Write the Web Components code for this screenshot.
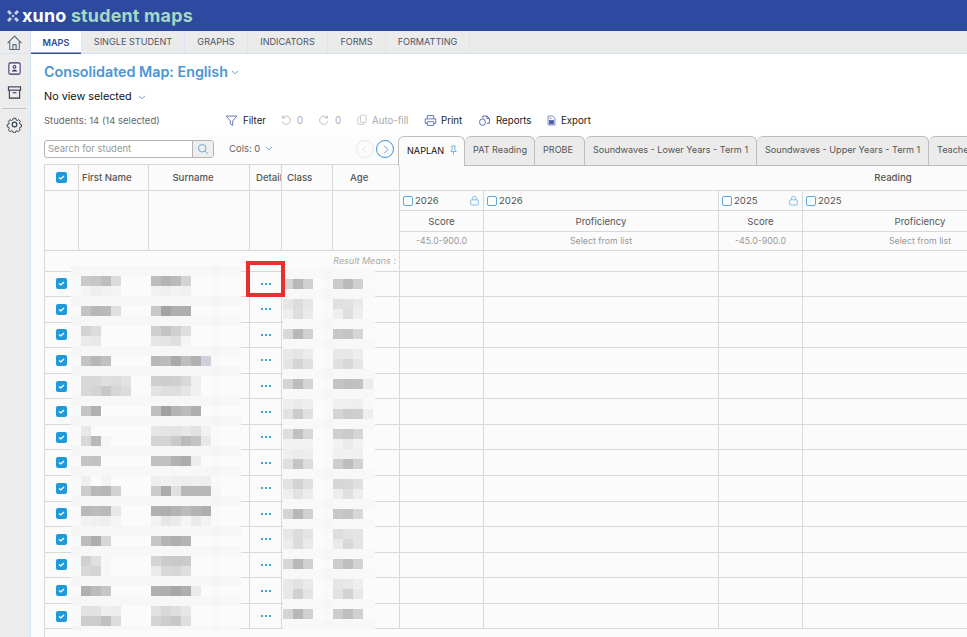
<!DOCTYPE html>
<html>
<head>
<meta charset="utf-8">
<title>xuno student maps</title>
<style>
  html, body { margin: 0; height: 100%; overflow: hidden; background: #fcfcfc; }
  body { font-family: "Inter", "Noto Sans", sans-serif; display: flex; flex-direction: column; width: 967px; height: 637px; }
</style>
</head>
<body>
<app-header></app-header>
<app-shell>
  <side-rail slot="rail"></side-rail>
  <nav-tabs></nav-tabs>
  <map-heading></map-heading>
  <map-toolbar></map-toolbar>
  <map-sheet></map-sheet>
</app-shell>

<script>
const ICONS = {
  home: '<path d="M1.500 8.500 8 2l6.500 6.500M3.500 7v7.500h9V7M6.500 14.500v-4.500h3v4.500"/>',
  card: '<rect x="2" y="2" width="12" height="12" rx="1.500" fill="#f4f4f8"/><circle cx="8" cy="6.200" r="1.500"/><path d="M5 11.300c.3-1.500 1.500-2 3-2s2.700.5 3 2z" fill="currentColor" stroke="none"/>',
  box: '<rect x="1.500" y="2" width="13" height="3.500"/><path d="M2.500 5.500v8.500h11V5.500M6 8.200h4"/>',
  gear: '<circle cx="8" cy="8" r="2.200"/><path d="M6.600 1.500h2.800l.4 1.900 1.300.6 1.700-1 1.800 2-1.100 1.600.4 1.300 1.800.5v2.600l-1.800.5-.5 1.300 1 1.600-1.900 1.900-1.600-1-1.400.5-.4 1.800H6.600l-.4-1.800-1.400-.5-1.600 1-1.900-1.900 1-1.600-.5-1.300-1.800-.5V8.400l1.800-.5.4-1.300-1.100-1.600 1.800-2 1.700 1 1.300-.6z" transform="translate(1.200 .9) scale(.85)"/>',
  filter: '<path d="M1.500 2.500h13L9.500 8.500v5.500l-3-2V8.500z"/>',
  undo: '<path d="M3.500 2v3.500H7M3.700 5.300A5.500 5.500 0 1 1 3 9.500"/>',
  redo: '<path d="M12.500 2v3.500H9M12.300 5.300A5.500 5.500 0 1 0 13 9.500"/>',
  copy: '<rect x="6" y="1.500" width="7.500" height="10" rx="1.500"/><path d="M6 4H4a1.500 1.500 0 0 0-1.500 1.500v7A1.500 1.500 0 0 0 4 14h5a1.500 1.500 0 0 0 1.500-1.500v-1"/>',
  print: '<path d="M4 6V2h8v4M4 11.500H1.500V6h13v5.500H12M4 9.500h8V14H4z"/>',
  reports: '<path d="M6 2.500h5l3 3v6h-3M6 2.500V5"/><rect x="2" y="6" width="7" height="8" rx="3.500"/><path d="M11 2.500v3h3"/>',
  export: '<path d="M3 1.500h7l3 3v10H3z"/><rect x="5" y="8" width="6" height="5" fill="currentColor"/><path d="M5 5h3"/>',
  search: '<circle cx="7" cy="7" r="5"/><path d="m10.700 10.700 3.800 3.800"/>',
  chevron: '<path d="m3 6 5 5 5-5"/>',
  pin: '<path d="M5 1.500h6M6 1.500V7L4 9.500h8L10 7V1.500M8 9.500v5"/>',
  lock: '<rect x="2.500" y="7" width="11" height="7.500" rx="1"/><path d="M5 7V5a3 3 0 0 1 6 0v2"/>',
  left: '<path d="M10 2.500 4.500 8l5.500 5.500"/>',
  right: '<path d="M6 2.500 11.500 8 6 13.500"/>'
};

function icon(name, size, color, width) {
  return `<svg width="${size}" height="${size}" viewBox="0 0 16 16" fill="none" stroke="currentColor" stroke-width="${width || 1.2}" style="color:${color};display:block;flex:none">${ICONS[name]}</svg>`;
}

class AppHeader extends HTMLElement {
  constructor() {
    super();
    this.attachShadow({ mode: "open" });
  }

  connectedCallback() {
    this.shadowRoot.innerHTML = `
    <style>
      :host { display: flex; align-items: center; height: 31px; flex: none; background: #2d49a0; padding-left: 7px; box-sizing: border-box; }
      svg { margin-right: 3px; }
      .brand { font: 700 17.900px/30px "Inter", sans-serif; color: #fff; letter-spacing: .2px; }
      .brand span { color: #a6d8c6; }
    </style>
    <svg width="12" height="12" viewBox="0 0 12 12" fill="#c7d3e6">
      <circle cx="6" cy="6" r="1.200"/>
      <path d="M0 2 2 0 5 3 3 5zM12 2 10 0 7 3 9 5zM0 10 2 12 5 9 3 7zM12 10 10 12 7 9 9 7z"/>
    </svg>
    <div class="brand">xuno <span>student maps</span></div>`;
  }
}

class AppShell extends HTMLElement {
  constructor() {
    super();
    this.attachShadow({ mode: "open" });
  }

  connectedCallback() {
    this.shadowRoot.innerHTML = `
    <style>
      :host { display: flex; flex: 1; min-height: 0; }
      .main { flex: 1; min-width: 0; display: flex; flex-direction: column; overflow: hidden; position: relative; }
    </style>
    <slot name="rail"></slot>
    <div class="main"><slot></slot></div>`;
  }
}

class SideRail extends HTMLElement {
  constructor() {
    super();
    this.attachShadow({ mode: "open" });
  }

  connectedCallback() {
    this.shadowRoot.innerHTML = `
    <style>
      :host { display: flex; flex-direction: column; align-items: center; width: 31px; flex: none; box-sizing: border-box; background: #ececec; border-right: 1px solid #d6e4f5; }
      .home { height: 23px; width: 100%; display: flex; align-items: center; justify-content: center; padding-right: 2px; box-sizing: border-box; border-bottom: 1px solid #d6e4f5; }
      .item { margin: 0 2px 0 0; }
      hr { width: 24px; margin: 8px 2px 7px 0; border: 0; border-top: 1px solid #c4c4c4; }
    </style>
    <div class="home">${icon("home", 17, "#5b6b80", 1)}</div>
    <div class="item" style="margin-top:7px">${icon("card", 15, "#37306a", 1.100)}</div>
    <div class="item" style="margin-top:9px">${icon("box", 15, "#2d2f4a", 1.100)}</div>
    <hr>
    <div class="item">${icon("gear", 17, "#35404f", 1.100)}</div>`;
  }
}

class NavTabs extends HTMLElement {
  constructor() {
    super();
    this.attachShadow({ mode: "open" });
  }

  connectedCallback() {
    const tabs = [["MAPS", 51], ["SINGLE STUDENT", 103], ["GRAPHS", 63], ["INDICATORS", 80], ["FORMS", 58], ["FORMATTING", 84]];
    this.shadowRoot.innerHTML = `
    <style>
      :host { display: flex; height: 23px; flex: none; background: #ebebeb; box-sizing: border-box; border-bottom: 1px solid #d6e4f5; }
      .tab { box-sizing: border-box; text-align: center; font-size: 9.100px; line-height: 22px; color: #4b5566; border-right: 1px solid #dbe5f1; white-space: nowrap; }
      .tab.on { background: #fff; color: #2d49a0; font-weight: 600; box-shadow: inset 0 -1.500px 0 #2d49a0; margin-bottom: -1px; line-height: 23px; }
    </style>
    ${tabs.map((t, i) => `<div class="tab ${i ? "" : "on"}" style="width:${t[1]}px">${t[0]}</div>`).join("")}`;
  }
}

class MapHeading extends HTMLElement {
  constructor() {
    super();
    this.attachShadow({ mode: "open" });
  }

  connectedCallback() {
    this.shadowRoot.innerHTML = `
    <style>
      :host { display: block; flex: none; background: #fff; padding: 8px 0 0 13px; height: 43px; }
      .title { display: flex; align-items: center; gap: 2px; font-size: 14.300px; line-height: 20px; font-weight: 600; color: #4a96d6; }
      .view { display: flex; align-items: center; gap: 5px; margin-top: 7px; font-size: 10.800px; line-height: 16px; color: #111; }
    </style>
    <div class="title">Consolidated Map: English ${icon("chevron", 10, "#4a96d6", 1.400)}</div>
    <div class="view">No view selected ${icon("chevron", 10, "#4a96d6", 1.400)}</div>`;
  }
}

class MapToolbar extends HTMLElement {
  constructor() {
    super();
    this.attachShadow({ mode: "open" });
  }

  connectedCallback() {
    this.shadowRoot.innerHTML = `
    <style>
      :host { display: flex; align-items: center; flex: none; height: 30px; background: #fff; padding: 0 0 0 13px; font-size: 9.700px; }
      .count { color: #666; width: 181px; flex: none; font-size: 9.500px; }
      .item { display: flex; align-items: center; white-space: nowrap; }
      .item span { display: block; }
      .bar { display: flex; align-items: center; }
    </style>
    <div class="count">Students: 14 (14 selected)</div>
    <div class="bar">
      <div class="item" style="color:#222;width:55px"><span style="margin-right:5px">${icon("filter", 13, "#4a59a8", 1)}</span>Filter</div>
      <div class="item" style="color:#aaa;width:38px"><span style="margin-right:5px">${icon("undo", 12, "#aaa", 1)}</span>0</div>
      <div class="item" style="color:#aaa;width:38px"><span style="margin-right:5px">${icon("redo", 12, "#aaa", 1)}</span>0</div>
      <div class="item" style="color:#aaa;width:68px"><span style="margin-right:4px">${icon("copy", 12, "#bbb", 1)}</span>Auto-fill</div>
      <div class="item" style="color:#222;width:54px"><span style="margin-right:4px">${icon("print", 13, "#4a59a8", 1)}</span>Print</div>
      <div class="item" style="color:#222;width:68px"><span style="margin-right:5px">${icon("reports", 13, "#3a4a9a", 1)}</span>Reports</div>
      <div class="item" style="color:#222"><span style="margin-right:4px">${icon("export", 11, "#4a59a8", 1)}</span>Export</div>
    </div>`;
  }
}

class SearchBox extends HTMLElement {
  constructor() {
    super();
    this.attachShadow({ mode: "open" });
  }

  connectedCallback() {
    this.shadowRoot.innerHTML = `
    <style>
      :host { display: flex; width: 170px; height: 18px; margin-bottom: 2px; box-sizing: border-box; border: 1px solid #b5b5b5; border-radius: 3px; background: #fff; overflow: hidden; flex: none; }
      .txt { flex: 1; font-size: 9.500px; line-height: 16px; color: #999; padding-left: 3px; }
      .btn { width: 20px; background: #eee; border-left: 1px solid #b5b5b5; display: flex; align-items: center; justify-content: center; }
    </style>
    <div class="txt">Search for student</div>
    <div class="btn">${icon("search", 12, "#4a9bd8", 1.100)}</div>`;
  }
}

class SheetTabs extends HTMLElement {
  constructor() {
    super();
    this.attachShadow({ mode: "open" });
  }

  connectedCallback() {
    const tabs = [
      ["PAT Reading", 70], ["PROBE", 50],
      ["Soundwaves - Lower Years - Term 1", 172], ["Soundwaves - Upper Years - Term 1", 172], ["Teacher Judgement", 120]
    ];
    this.shadowRoot.innerHTML = `
    <style>
      :host { display: flex; height: 30px; flex: none; position: relative; z-index: 1; margin-bottom: -1px; }
      .tab { box-sizing: border-box; height: 30px; border: 1px solid #bdbdbd; border-left: 0; border-radius: 6px 6px 0 0; background: #ebebeb; padding-left: 8px; font-size: 9.100px; line-height: 25px; color: #555; white-space: nowrap; flex: none; }
      .tab.on { background: #fbfbfb; border-left: 1px solid #bdbdbd; border-bottom: 0; color: #111; display: flex; align-items: center; gap: 4px; width: 67px; padding-bottom: 2px; }
    </style>
    <div class="tab on">NAPLAN ${icon("pin", 11, "#4a9bd8", 1)}</div>
    ${tabs.map(t => `<div class="tab" style="width:${t[1]}px">${t[0]}</div>`).join("")}`;
  }
}

class CheckMark extends HTMLElement {
  constructor() {
    super();
    this.attachShadow({ mode: "open" });
  }

  connectedCallback() {
    const on = this.hasAttribute("on");
    this.shadowRoot.innerHTML = `
    <style>
      :host { display: block; flex: none; width: ${on ? 11 : 10}px; height: ${on ? 11 : 10}px; box-sizing: border-box; border-radius: 2px; ${on ? "background: #2099d8;" : "border: 1px solid #5aa9e0; background: #fcfcfc;"} }
      svg { display: block; }
    </style>
    ${on ? '<svg width="11" height="11" viewBox="0 0 11 11" fill="none" stroke="#fff" stroke-width="1.300"><path d="m3 5.500 1.800 1.500L8 4"/></svg>' : ""}`;
  }
}

// Pixelated cover put over the student names in the screenshot
class PixelMosaic extends HTMLElement {
  constructor() {
    super();
    this.attachShadow({ mode: "open" });
  }

  set rows(data) {
    const { width, height, band, columns, start } = data;
    const color = v => v.length === 2 ? `#${v}${v}${v}` : `#${v}`;
    let rects = "";
    for (let j = 0; j * 10 < height; j++) {
      const row = data.rows[j];
      for (const [x, w, bandColor, plainColor] of band) {
        rects += `<rect x="${x}" y="${j * 10}" width="${w}" height="10" fill="${color(row ? plainColor : bandColor)}"/>`;
      }
      if (!row) continue;
      row.forEach((group, g) => group.forEach((v, i) => {
        rects += `<rect x="${columns[g] + i * 10}" y="${j * 10}" width="10" height="10" fill="${color(v)}"/>`;
      }));
    }
    this.shadowRoot.innerHTML = `
    <style>
      :host { display: block; position: absolute; left: ${data.left}px; top: ${start}px; width: ${width}px; height: ${height}px; z-index: 2; }
      svg { display: block; }
    </style>
    <svg width="${width}" height="${height}" shape-rendering="crispEdges">${rects}</svg>`;
  }
}

const NAME_ROWS = {
  1: [["c9","c6","bd","dc"],["bd","b4","bb","d3"]],
  2: [["f5","ee","f2","f4"],["f2","ef","f3","f1"]],
  4: [["c3","b7","b9","e0"],["c8","a3","af","af"]],
  6: [["d2","dc"],["cf","c4","d0","df"]],
  7: [["ea","e8"],["e5","e4","df","f5"]],
  9: [["c3","b6","c0"],["b8","bb","a9","bd","b0","ced1dc"]],
  11: [["d8","d8","df","dc","e2"],["cf","cd","cf","d9","ef"]],
  12: [["d8","d4","c8","d6","dc"],["e3","de","de","e5","f1"]],
  14: [["c4","b0"],["bf","a0","b4","bb","ae"]],
  16: [["e8","fa"],["e6","e4","e3","e8","e1","f2"]],
  17: [["d8","b8","f5"],["d4","d4","ca","bb","c4","e8"]],
  19: [["c4","c2"],["c0","c0","b2","ac","ed"]],
  21: [["f0","fb","f4"],["ee","f2","ef","ee","f0","ee"]],
  22: [["cc","b8","b6","d2"],["cb","ab","e0","b8","b8","b8","f6"]],
  24: [["b9","bc","b9","e8"],["b0","ae","b4","bb","b4","ae"]],
  25: [["f2","f0","ee","f5"],["f3","e6","eb","f5","ea","f2"]],
  27: [["bd","ad","d6"],["c6","b4","ae","b4"]],
  29: [["d0","df","f7"],["d4","cb","c9","cb"]],
  30: [["d8","d4","f7"],["ea","d8","d6","df"]],
  32: [["b0","bb","c6"],["b0","ae","a6","ae","ea"]],
  34: [["e2","e2","ef","ec"],["e2","d8","de","e6"]],
  35: [["cd","cc","c0","dc"],["d4","cd","c8","df"]]
};

const CLASS_ROWS = {
  1: [["d5","b8","d0"],["cb","ba","d0"]],
  3: [["e6","dc","e6"],["e0","e2","ea"]],
  4: [["ee","de","ea"],["ee","de","ee"]],
  6: [["d8","b8","d0"],["c8","c4","d6"]],
  8: [["e8","e4","ec"],["e8","e8","ee"]],
  9: [["e4","d4","e0"],["e0","d8","e6"]],
  11: [["d4","bc","d4"],["c4","bf","c2","ec"]],
  13: [["ee","ea","ee"],["f0","ef","ee","f8"]],
  14: [["e2","cc","e0"],["d4","cd","cf","ee"]],
  16: [["de","c0","d8"],["cf","ca","d6"]],
  17: [["f2","f2","f2"],["f2","ea","f2"]],
  18: [["ee","ec","ee"],["f0","f0","f0"]],
  19: [["e0","c4","dc"],["cd","bd","d2"]],
  21: [["e2","d2","e0"],["d6","d8","e0"]],
  22: [["ee","e2","ec"],["ee","e0","ee"]],
  24: [["d4","b8","d0"],["c8","c4","d8"]],
  26: [["e6","dc","e4"],["de","e2","e4"]],
  27: [["ec","dc","ea"],["ea","d8","e4"]],
  29: [["d6","b8","d0"],["cc","bf","d2"]],
  31: [["e8","e2","ea"],["e6","e8","ee"]],
  32: [["e8","d0","e4"],["e2","d2","e8"]],
  34: [["d4","b8","d0"],["cc","bf","d0"]]
};

class MapSheet extends HTMLElement {
  constructor() {
    super();
    this.attachShadow({ mode: "open" });
  }

  connectedCallback() {
    const year = (y, lock) => `<div class="c year"><check-mark></check-mark>${y}${lock ? `<span class="lock">${icon("lock", 11, "#6bb4e6", 1.200)}</span>` : ""}</div>`;
    let rows = "";
    for (let i = 0; i < 14; i++) {
      rows += `<div class="c tick"><check-mark on></check-mark></div><div class="c"></div><div class="c"></div>
        <div class="c dots"><i></i><i></i><i></i></div><div class="c"></div><div class="c"></div>
        <div class="c"></div><div class="c"></div><div class="c"></div><div class="c"></div><div class="c"></div>`;
    }
    this.shadowRoot.innerHTML = `
    <style>
      :host { display: block; flex: 1; min-height: 0; position: relative; background: #fcfcfc; padding: 0 0 0 13px; }
      .top { display: flex; align-items: center; height: 30px; }
      .cols { display: flex; align-items: center; gap: 4px; margin: 0 0 4px 15px; font-size: 9.500px; color: #666; width: 127px; flex: none; }
      .nav { display: flex; gap: 2px; width: 42px; flex: none; margin-bottom: 2px; }
      .circle { width: 18px; height: 18px; box-sizing: border-box; border-radius: 50%; display: flex; align-items: center; justify-content: center; }
      .prev { border: 1.500px solid #e8e8e8; }
      .next { border: 1.500px solid #3a96d8; }
      .grid { display: grid; grid-template-columns: 34px 70px 101px 32px 51px 67px 84px 235px 84px 235px 84px; grid-template-rows: 26px 20px 21px 18.500px 21px repeat(14, 25.570px) 12px; background: #fbfbfb; border-top: 1px solid #d8d8d8; border-left: 1px solid #d8d8d8; margin-top: -1px; }
      .c { border-right: 1px solid #d8d8d8; border-bottom: 1px solid #d8d8d8; box-sizing: border-box; min-width: 0; font-size: 9.600px; color: #555; display: flex; align-items: center; justify-content: center; white-space: nowrap; overflow: hidden; }
      .h { font-weight: 500; color: #555; }
      .name { justify-content: flex-start; padding-left: 4px; }
      .blank { grid-row: span 3; }
      .year { justify-content: flex-start; padding-left: 3px; gap: 2px; position: relative; color: #555; }
      .lock { position: absolute; right: 3px; top: 4px; }
      .range { color: #999; font-size: 8.800px; }
      .means { grid-column: span 6; justify-content: flex-end; padding-right: 3px; font-style: italic; font-size: 9px; color: #aaa; }
      .dots { gap: 2px; }
      .dots i { display: block; width: 2px; height: 2px; background: #3aa5d9; }
      .foot { grid-column: 1 / -1; background: #fbfbfb; }
      .mark { position: absolute; left: 215px; top: 126px; width: 39px; height: 36px; box-sizing: border-box; border: 4px solid #e8302f; z-index: 3; }
    </style>
    <div class="top">
      <search-box></search-box>
      <div class="cols">Cols: 0 ${icon("chevron", 10, "#4a96d6", 1.300)}</div>
      <div class="nav">
        <div class="circle prev">${icon("left", 10, "#e2e2e2", 1.400)}</div>
        <div class="circle next">${icon("right", 11, "#3a96d8", 1.300)}</div>
      </div>
      <sheet-tabs></sheet-tabs>
    </div>
    <div class="grid">
      <div class="c"><check-mark on></check-mark></div>
      <div class="c h name" style="padding-left:3px">First Name</div>
      <div class="c h" style="padding-right:12px">Surname</div>
      <div class="c h name" style="padding-left:6px">Details</div>
      <div class="c h name" style="padding-left:5px">Class</div>
      <div class="c h name" style="padding-left:17px">Age</div>
      <div class="c" style="grid-column:span 2;border-right:0"></div>
      <div class="c h" style="grid-column:span 3;border-right:0;padding-right:55px">Reading</div>
      <div class="c blank"></div><div class="c blank"></div><div class="c blank"></div>
      <div class="c blank"></div><div class="c blank"></div><div class="c blank"></div>
      ${year("2026", true)}${year("2026")}${year("2025", true)}${year("2025")}<div class="c"></div>
      <div class="c">Score</div><div class="c">Proficiency</div><div class="c">Score</div><div class="c">Proficiency</div><div class="c"></div>
      <div class="c range">-45.0-900.0</div><div class="c range">Select from list</div><div class="c range">-45.0-900.0</div><div class="c range">Select from list</div><div class="c"></div>
      <div class="c means">Result Means :</div>
      <div class="c"></div><div class="c"></div><div class="c"></div><div class="c"></div><div class="c"></div>
      ${rows}
      <div class="foot"></div>
    </div>
    <pixel-mosaic id="names"></pixel-mosaic>
    <pixel-mosaic id="classes"></pixel-mosaic>
    <div class="mark"></div>`;

    this.shadowRoot.getElementById("names").rows = {
      left: 40, start: 131, width: 170, height: 364, columns: [10, 80], rows: NAME_ROWS,
      band: [[0, 10, "f5", "f9"], [10, 130, "f7", "fb"], [140, 10, "f5", "f9"], [150, 20, "f7", "fb"]]
    };
    this.shadowRoot.getElementById("classes").rows = {
      left: 252, start: 134, width: 92, height: 360, columns: [0, 50], rows: CLASS_ROWS,
      band: [[0, 40, "f8", "fb"], [40, 10, "f6", "f9"], [50, 42, "f8", "fb"]]
    };
  }
}

customElements.define("app-header", AppHeader);
customElements.define("app-shell", AppShell);
customElements.define("side-rail", SideRail);
customElements.define("nav-tabs", NavTabs);
customElements.define("map-heading", MapHeading);
customElements.define("map-toolbar", MapToolbar);
customElements.define("search-box", SearchBox);
customElements.define("sheet-tabs", SheetTabs);
customElements.define("check-mark", CheckMark);
customElements.define("pixel-mosaic", PixelMosaic);
customElements.define("map-sheet", MapSheet);
</script>
</body>
</html>
